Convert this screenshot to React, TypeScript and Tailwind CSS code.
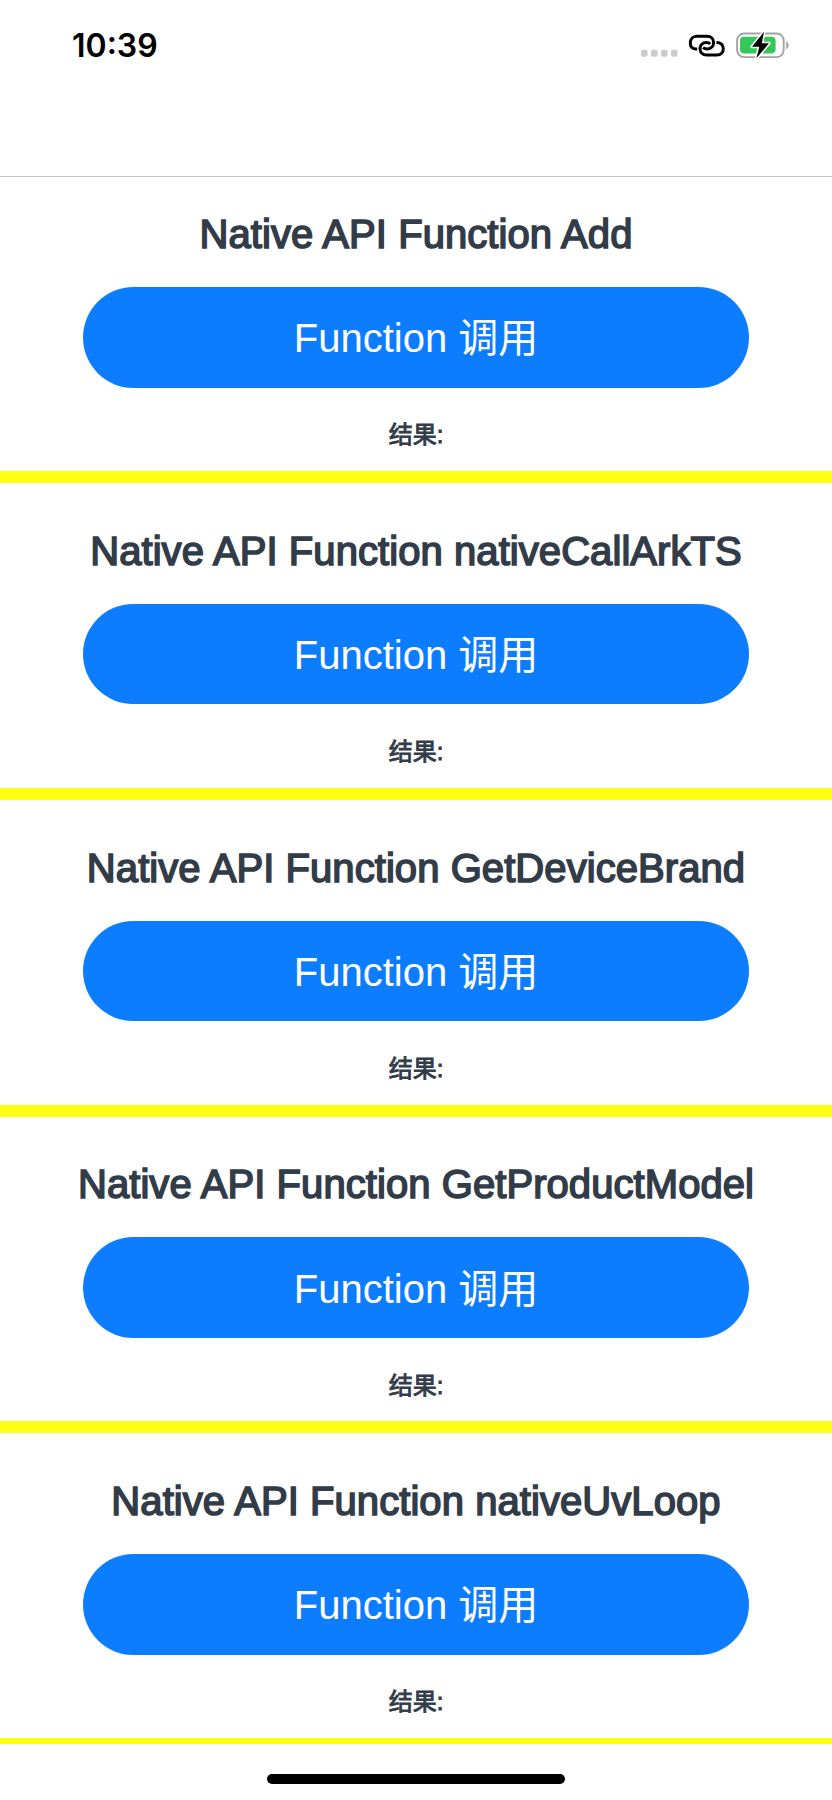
import React from 'react';

const functions = ['Add', 'nativeCallArkTS', 'GetDeviceBrand', 'GetProductModel', 'nativeUvLoop'];

function StatusIcons() {
  return (
    <svg width="152" height="40" viewBox="0 0 152 40" fill="none">
      <g fill="#cbcbcb">
        <rect x="1" y="19.8" width="6.6" height="7" rx="1.8" />
        <rect x="11" y="19.8" width="6.6" height="7" rx="1.8" />
        <rect x="21" y="19.8" width="6.6" height="7" rx="1.8" />
        <rect x="31" y="19.8" width="6.6" height="7" rx="1.8" />
      </g>
      <g stroke="#000" strokeWidth="3" strokeLinecap="butt">
        <path d="M57.2 18.9 H55.5 C51.5 18.9 50.3 16.1 50.3 13.1 C50.3 9.5 52.8 6.3 56.8 6.3 H67 C71.1 6.3 73.6 9.2 73.6 12.6 C73.6 16.1 71.1 18.9 67.4 18.9 C65.6 18.9 64.2 18.5 63 17.6" />
        <path d="M70.2 14 C69.1 12.9 67.8 12.5 66.4 12.5 C62.5 12.5 60 15.4 60 18.7 C60 22.2 62.6 25 66.6 25 H76.8 C80.9 25 83.3 22.2 83.3 18.7 C83.3 15 80.9 12.4 76.4 12.4" />
      </g>
      <rect x="97.1" y="3.5" width="46.6" height="23.6" rx="7" stroke="#a3a3a3" strokeWidth="1.9" />
      <path d="M146.2 11.2 C149.4 12.6 149.4 17.8 146.2 19.2 Z" fill="#a3a3a3" />
      <rect x="100" y="6.8" width="35.6" height="16.6" rx="3.8" fill="#34c759" />
      <path
        d="M124 1.8 L112 16.7 H119.3 L116.4 28.3 L129 13.3 H121.8 Z"
        fill="#000"
        stroke="#fff"
        strokeWidth="3.2"
        strokeLinejoin="round"
        paintOrder="stroke"
      />
    </svg>
  );
}

function FunctionPanel({ name, first }: { name: string; first: boolean }) {
  return (
    <section
      className={`flex shrink-0 flex-col items-center justify-end border-b-[12px] border-[#ffff14] ${
        first ? 'h-[306px]' : 'h-[316.8px]'
      }`}
    >
      <h2 className="mb-[29px] text-[40px] leading-[48px] font-normal tracking-[0.07px] whitespace-nowrap text-[#323c48] [-webkit-text-stroke:1.6px_#323c48]">
        Native API Function {name}
      </h2>
      <button className="h-[100.5px] w-[666px] shrink-0 rounded-full bg-[#0d7dff] pt-[2px] text-[40px] leading-[48px] text-white">
        Function 调用
      </button>
      <p className="flex h-[83.5px] shrink-0 items-center pt-[12px] text-[24px] leading-[28px] text-[#323c48] [-webkit-text-stroke:0.9px_#323c48]">
        结果:
      </p>
    </section>
  );
}

export default function App() {
  return (
    <div className="flex h-[1800px] w-[832px] flex-col overflow-hidden bg-white font-['Liberation_Sans','Noto_Sans_CJK_SC',sans-serif]">
      <header className="flex h-[177px] shrink-0 items-start justify-between border-b border-[#c8c8c8] pt-[25px] pr-[40px] pl-[72px]">
        <time className="pt-px font-['Inter',sans-serif] text-[32px] leading-[40px] font-semibold text-black">10:39</time>
        <div className="pt-[5px]">
          <StatusIcons />
        </div>
      </header>
      <main className="flex h-[1566.5px] shrink-0 flex-col overflow-hidden">
        {functions.map((name, i) => (
          <FunctionPanel key={name} name={name} first={i === 0} />
        ))}
      </main>
      <footer className="flex justify-center pt-[30px]">
        <div className="h-[10px] w-[298px] rounded-full bg-black" />
      </footer>
    </div>
  );
}
